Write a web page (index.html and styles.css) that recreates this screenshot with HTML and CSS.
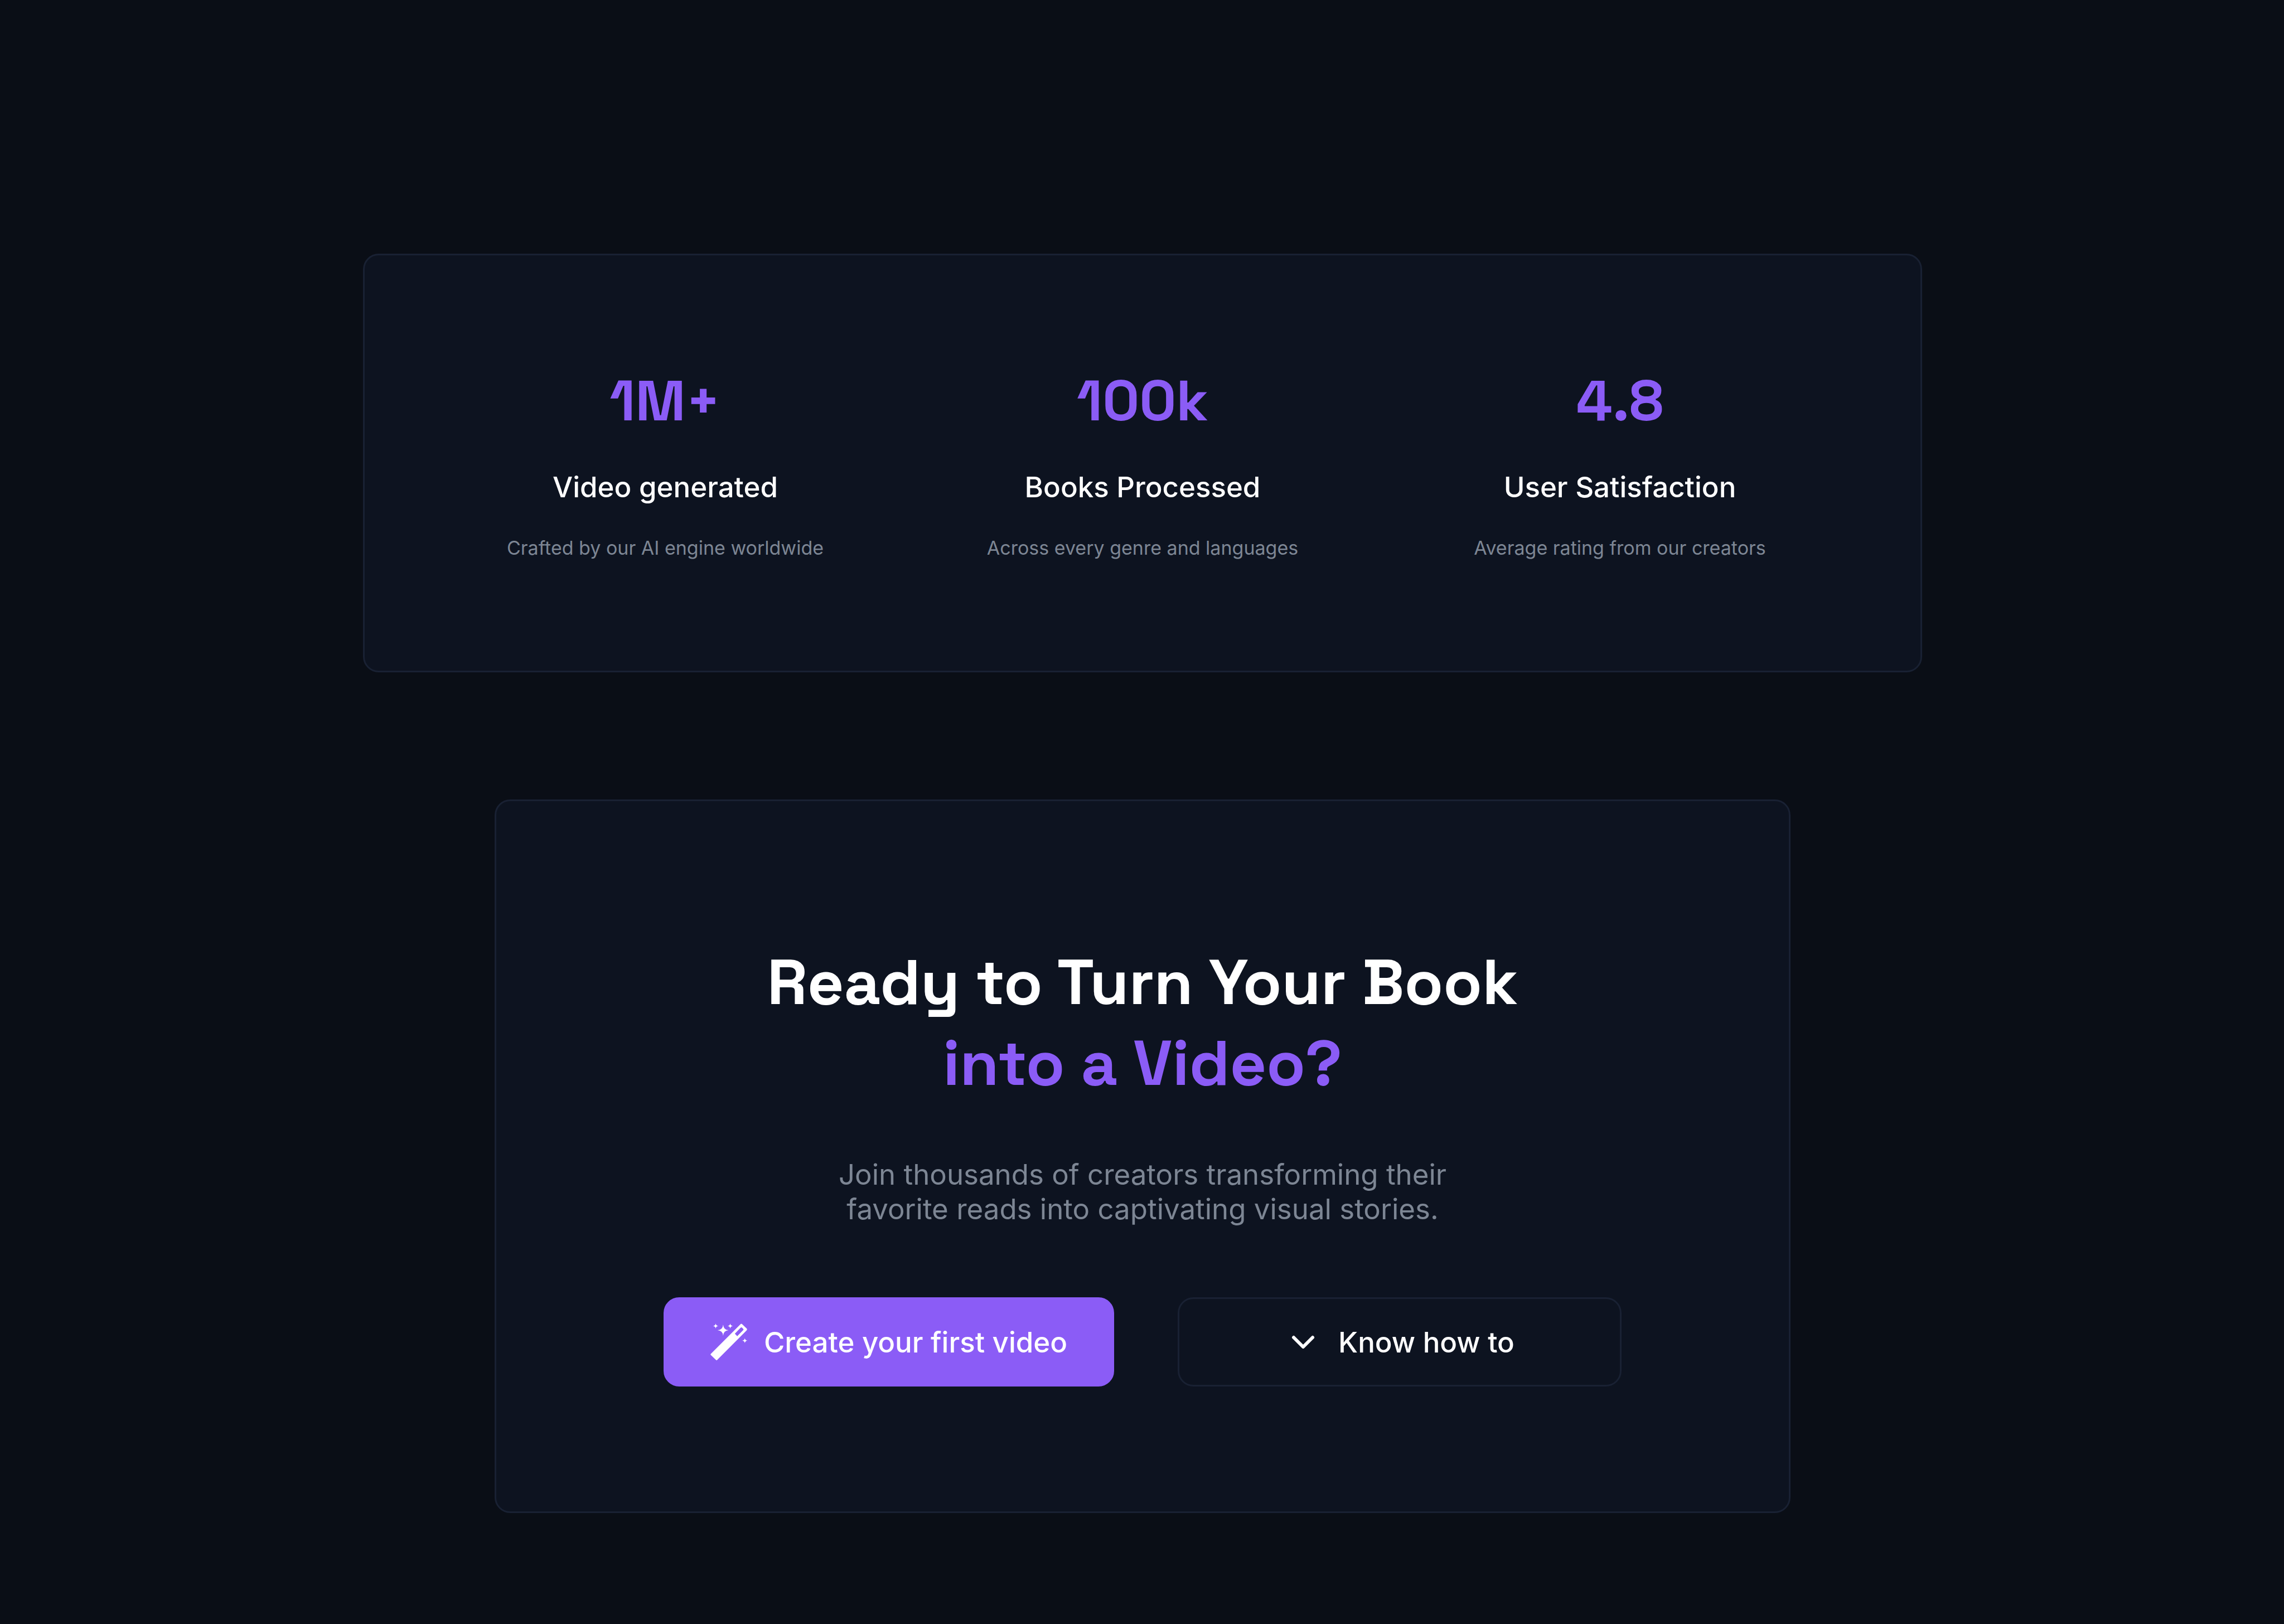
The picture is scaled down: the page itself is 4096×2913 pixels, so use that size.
FILE: index.html
```
<!DOCTYPE html>
<html lang="en">
<head>
  <meta charset="UTF-8">
  <meta name="viewport" content="width=device-width, initial-scale=1.0">
  <title>Turn Your Book into a Video</title>
  <link rel="stylesheet" href="styles.css">
</head>
<body>
  <main class="page">
    <!-- Stats -->
    <section class="card stats">
      <div class="stat">
        <p class="stat-number">1M+</p>
        <h3>Video generated</h3>
        <p class="stat-text">Crafted by our AI engine worldwide</p>
      </div>
      <div class="stat">
        <p class="stat-number">100k</p>
        <h3>Books Processed</h3>
        <p class="stat-text">Across every genre and languages</p>
      </div>
      <div class="stat">
        <p class="stat-number">4.8</p>
        <h3>User Satisfaction</h3>
        <p class="stat-text">Average rating from our creators</p>
      </div>
    </section>

    <!-- Call to action -->
    <section class="card cta">
      <h2>Ready to Turn Your Book<br><span class="accent">into a Video?</span></h2>
      <p class="cta-text">Join thousands of creators transforming their<br>favorite reads into captivating visual stories.</p>
      <div class="cta-buttons">
        <button class="btn btn-primary" type="button">
          <svg class="icon" viewBox="0 0 280 280" aria-hidden="true">
            <path fill-rule="evenodd" d="M3 231 L228 6 Q235 -1 243 6 L276 38 Q282 45 276 52 L51 278 Q47 282 42 277 L3 240 Q-1 235 3 231 Z M186 77 L204 96 L250 50 Q254 45 249 40 L240 31 Q235 27 230 32 Z"/>
            <path d="M97 8 Q100 49 138 51 Q100 54 97 93 Q94 54 54 51 Q94 49 97 8 Z"/>
            <path d="M40 0 Q42 17 60 19 Q42 21 40 38 Q38 21 20 19 Q38 17 40 0 Z"/>
            <path d="M151 0 Q153 17 171 19 Q153 21 151 38 Q149 21 131 19 Q149 17 151 0 Z"/>
            <path d="M262 111 Q264 128 282 130 Q264 132 262 149 Q260 132 242 130 Q260 128 262 111 Z"/>
          </svg>
          Create your first video
        </button>
        <button class="btn btn-outline" type="button">
          <svg class="icon" viewBox="0 0 66 66" aria-hidden="true">
            <path class="chevron" d="M16 25 L33 42 L50 25"/>
          </svg>
          Know how to
        </button>
      </div>
    </section>
  </main>
</body>
</html>
```

FILE: styles.css
```
* {
  box-sizing: border-box;
}

body {
  background-color: #0a0e16;
  color: white;
  font-family: Inter, sans-serif;
  margin: 0;
}

h2, h3, p {
  margin: 0;
}

.page {
  display: flex;
  flex-direction: column;
  align-items: center;
  gap: 228px;
  padding: 455px 40px 199px 42px;
}

.card {
  width: 100%;
  background-color: #0d1320;
  border: 3px solid #192133;
  border-radius: 28px;
  text-align: center;
}

/* Stats */
.stats {
  display: grid;
  grid-template-columns: repeat(3, 1fr);
  max-width: 2796px;
  padding: 194px 111px 199px;
}

.stat {
  display: flex;
  flex-direction: column;
  gap: 57px;
}

.stat-number {
  color: #8b5cf6;
  font-family: "Space Grotesk", Inter, sans-serif;
  font-size: 102px;
  font-weight: 700;
  line-height: 134px;
}

.stat h3 {
  font-size: 51px;
  font-weight: 500;
  line-height: 62px;
}

.stat-text {
  color: #7d8694;
  font-size: 34px;
  line-height: 42px;
}

/* Call to action */
.cta {
  max-width: 2324px;
  padding: 252px 40px 224px;
}

.cta h2 {
  font-family: "Space Grotesk", Inter, sans-serif;
  font-size: 114px;
  font-weight: 700;
  line-height: 145px;
}

.accent {
  color: #8b5cf6;
}

.cta-text {
  margin-top: 97px;
  color: #7d8694;
  font-size: 51px;
  line-height: 62px;
}

.cta-buttons {
  display: flex;
  flex-wrap: wrap;
  justify-content: center;
  gap: 114px;
  margin-top: 127px;
}

.btn {
  display: flex;
  align-items: center;
  justify-content: center;
  gap: 30px;
  width: 796px;
  height: 160px;
  border: 3px solid #192133;
  border-radius: 28px;
  background-color: transparent;
  color: white;
  font-family: inherit;
  font-size: 51px;
  font-weight: 500;
  cursor: pointer;
}

.btn-primary {
  width: 808px;
  border-color: #8b5cf6;
  background-color: #8b5cf6;
}

.icon {
  width: 66px;
  height: 66px;
  fill: white;
}

.chevron {
  fill: none;
  stroke: white;
  stroke-width: 6;
  stroke-linecap: round;
  stroke-linejoin: round;
}
```
